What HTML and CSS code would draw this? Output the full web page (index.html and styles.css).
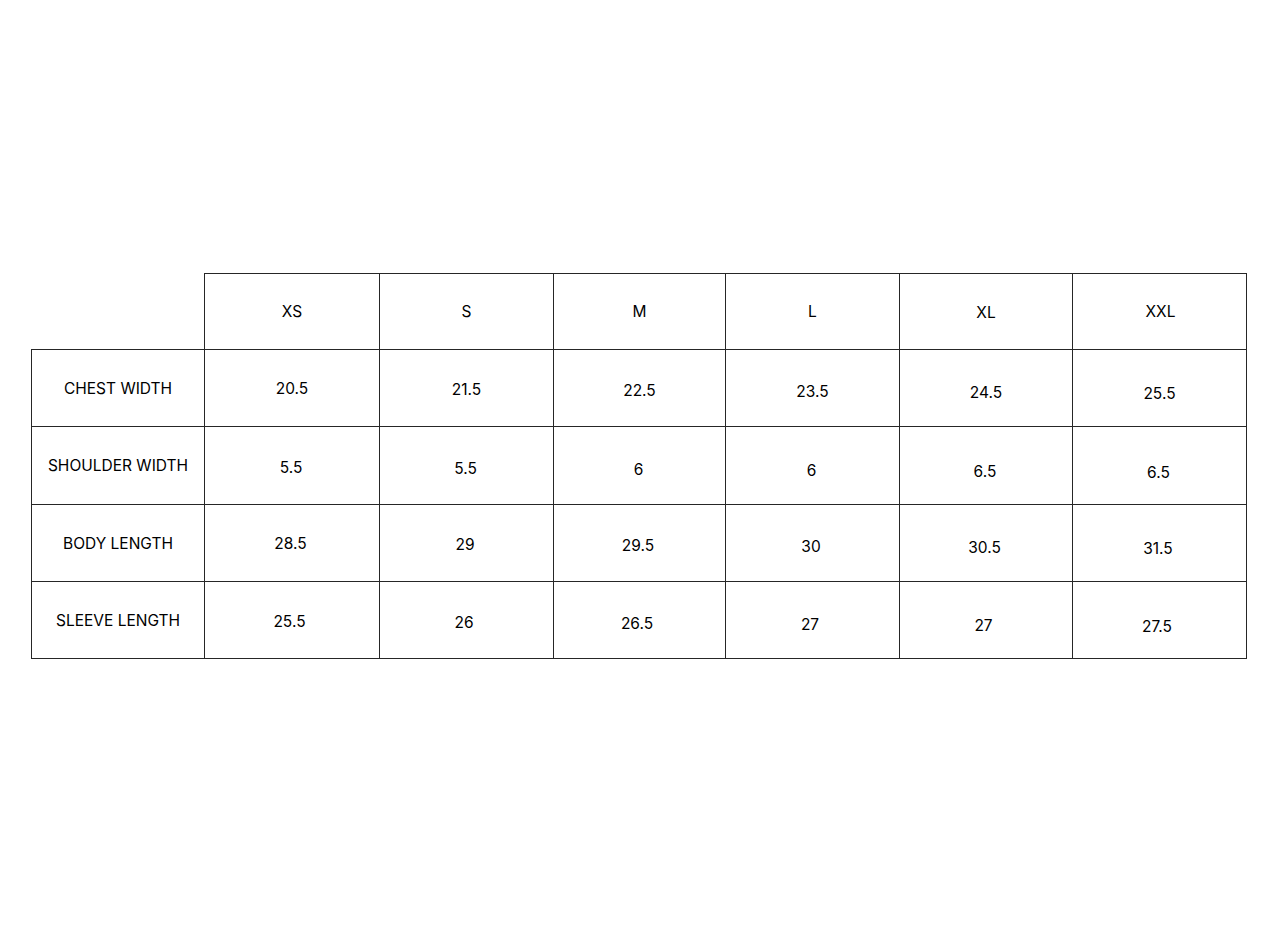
FILE: index.html
```html
<!DOCTYPE html>
<html lang="en">
<head>
<meta charset="utf-8">
<title>Size Chart</title>
<link rel="stylesheet" href="styles.css">
</head>
<body>
<div class="page">
  <div class="chart">
    <div class="cell blank"></div>
    <div class="cell head">XS</div>
    <div class="cell head">S</div>
    <div class="cell head">M</div>
    <div class="cell head">L</div>
    <div class="cell head">XL</div>
    <div class="cell head last-col">XXL</div>

    <div class="cell label">CHEST WIDTH</div>
    <div class="cell">20.5</div>
    <div class="cell">21.5</div>
    <div class="cell">22.5</div>
    <div class="cell">23.5</div>
    <div class="cell">24.5</div>
    <div class="cell last-col">25.5</div>

    <div class="cell label">SHOULDER WIDTH</div>
    <div class="cell">5.5</div>
    <div class="cell">5.5</div>
    <div class="cell">6</div>
    <div class="cell">6</div>
    <div class="cell">6.5</div>
    <div class="cell last-col">6.5</div>

    <div class="cell label">BODY LENGTH</div>
    <div class="cell">28.5</div>
    <div class="cell">29</div>
    <div class="cell">29.5</div>
    <div class="cell">30</div>
    <div class="cell">30.5</div>
    <div class="cell last-col">31.5</div>

    <div class="cell label last-row">SLEEVE LENGTH</div>
    <div class="cell last-row">25.5</div>
    <div class="cell last-row">26</div>
    <div class="cell last-row">26.5</div>
    <div class="cell last-row">27</div>
    <div class="cell last-row">27</div>
    <div class="cell last-row last-col">27.5</div>
  </div>
</div>
</body>
</html>
```
FILE: styles.css
```css
html, body {
  margin: 0;
  padding: 0;
  background: #ffffff;
}

.page {
  padding: 273px 0 0 31px;
  font-family: "Inter", "Liberation Sans", sans-serif;
  color: #000000;
}

.chart {
  display: grid;
  grid-template-columns: 173px 175px 174px 172px 174px 173px 175px;
  grid-template-rows: 76px 77px 78px 77px 78px;
}

.cell {
  --dy-col: 0;
  --dy-row: 0;
  --dx-row: 0;
  box-sizing: border-box;
  display: flex;
  align-items: center;
  justify-content: center;
  border-top: 1px solid #262626;
  border-left: 1px solid #262626;
  font-size: 15.5px;
  font-weight: 400;
  text-align: center;
  white-space: nowrap;
  padding-top: calc((var(--dy-col) + var(--dy-row)) * 2px);
  padding-right: calc(var(--dx-row) * 2px);
}

.cell.blank {
  border: none;
}

.cell.last-col {
  border-right: 1px solid #262626;
}

.cell.last-row {
  border-bottom: 1px solid #262626;
}

/* slight drift of the printed values across the sheet */
.chart > .cell:nth-child(n+8):nth-child(7n+3) { --dy-col: 1; }
.chart > .cell:nth-child(n+8):nth-child(7n+4) { --dy-col: 2; }
.chart > .cell:nth-child(n+8):nth-child(7n+5) { --dy-col: 3; }
.chart > .cell:nth-child(n+8):nth-child(7n+6) { --dy-col: 4; }
.chart > .cell:nth-child(n+8):nth-child(7n+7) { --dy-col: 5; }

.chart > .cell:nth-child(n+16):nth-child(-n+21) { --dy-row: 2; --dx-row: 1; }
.chart > .cell:nth-child(n+23):nth-child(-n+28) { --dx-row: 1.5; }
.chart > .cell:nth-child(n+30):nth-child(-n+35) { --dy-row: 1; --dx-row: 2.5; }

.chart > .cell:nth-child(6) { padding-top: 2px; }
.chart > .cell:nth-child(7) { padding-left: 2px; }
```
